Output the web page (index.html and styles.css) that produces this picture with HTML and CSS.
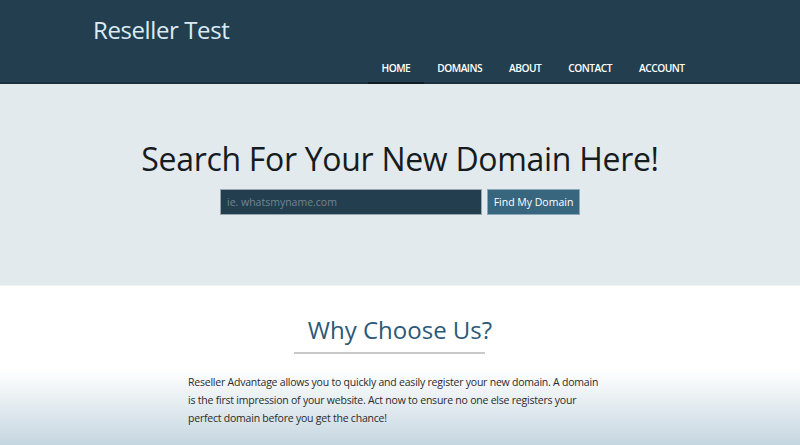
FILE: index.html
```html
<!DOCTYPE html>
<html lang="en">
<head>
<meta charset="utf-8">
<title>Reseller Test</title>
<link rel="stylesheet" href="styles.css">
</head>
<body>
<header class="site-header">
  <div class="header-inner">
    <div class="brand">Reseller Test</div>
    <nav class="main-nav">
      <a class="nav-item active" href="#">HOME</a>
      <a class="nav-item" href="#">DOMAINS</a>
      <a class="nav-item" href="#">ABOUT</a>
      <a class="nav-item" href="#">CONTACT</a>
      <a class="nav-item" href="#">ACCOUNT</a>
    </nav>
  </div>
</header>
<section class="hero">
  <h1 class="hero-title">Search For Your New Domain Here!</h1>
  <form class="search-form">
    <input class="search-input" type="text" placeholder="ie. whatsmyname.com">
    <button class="search-btn" type="button">Find My Domain</button>
  </form>
</section>
<section class="why">
  <h2 class="why-title">Why Choose Us?</h2>
  <hr class="why-rule">
  <p class="why-text">Reseller Advantage allows you to quickly and easily register your new domain. A domain is the first impression of your website. Act now to ensure no one else registers your perfect domain before you get the chance!</p>
</section>
</body>
</html>
```
FILE: styles.css
```css
html, body {
  margin: 0;
  padding: 0;
}
body {
  font-family: "Open Sans", "Noto Sans", sans-serif;
  background: #ffffff;
  height: 445px;
  overflow: hidden;
}
.site-header {
  background: #233f4f;
  border-bottom: 2px solid #1b3140;
  height: 82px;
}
.header-inner {
  width: 614px;
  margin: 0 auto;
  height: 82px;
  display: flex;
  flex-direction: column;
  justify-content: space-between;
}
.brand {
  color: #dcebf3;
  font-size: 24px;
  padding-top: 13px;
  line-height: 34px;
  letter-spacing: -0.4px;
}
.main-nav {
  display: flex;
  justify-content: flex-end;
  padding-right: 9px;
}
.nav-item {
  color: #ffffff;
  text-decoration: none;
  font-size: 10.2px;
  font-weight: 600;
  padding: 0 13.5px;
  height: 20px;
  line-height: 12px;
  box-sizing: border-box;
  letter-spacing: -0.5px;
}
.nav-item.active {
  border-bottom: 2px solid #111c22;
  height: 22px;
  margin-bottom: -2px;
}
.hero {
  background: #e3eaee;
  height: 202px;
  box-sizing: border-box;
  padding-top: 55px;
  border-bottom: 1px solid #eef3f5;
  text-align: center;
}
.hero-title {
  margin: 0;
  font-weight: 400;
  font-size: 32px;
  color: #161b1e;
  line-height: 40px;
  letter-spacing: -0.3px;
}
.search-form {
  display: flex;
  justify-content: center;
  gap: 5px;
  margin-top: 10px;
}
.search-input {
  width: 262px;
  height: 26px;
  box-sizing: border-box;
  background: #233f4f;
  border: 1px solid #9aa6ad;
  color: #ffffff;
  font-family: inherit;
  font-size: 10.5px;
  padding: 0 6px;
  outline: none;
}
.search-input::placeholder {
  color: #74858f;
}
.search-btn {
  width: 93px;
  height: 26px;
  box-sizing: border-box;
  background: #39667f;
  border: 1px solid #8aa9ba;
  color: #ffffff;
  font-family: inherit;
  font-size: 10.5px;
  padding: 0;
}
.why {
  height: 159px;
  box-sizing: border-box;
  background: linear-gradient(to bottom, #ffffff 0px, #ffffff 84px, #c5d6e0 159px);
  text-align: center;
  padding-top: 28px;
}
.why-title {
  margin: 0;
  font-weight: 400;
  font-size: 24px;
  line-height: 32px;
  color: #2c5977;
}
.why-rule {
  width: 191px;
  margin: 6px auto 0;
  position: relative;
  left: -11px;
  border: 0;
  border-top: 2px solid #c9c9c9;
  height: 0;
}
.why-text {
  width: 414px;
  margin: 19px auto 0;
  position: relative;
  left: -5px;
  text-align: left;
  font-size: 10.5px;
  line-height: 18px;
  color: #2b2b2b;
  letter-spacing: -0.22px;
}
```
